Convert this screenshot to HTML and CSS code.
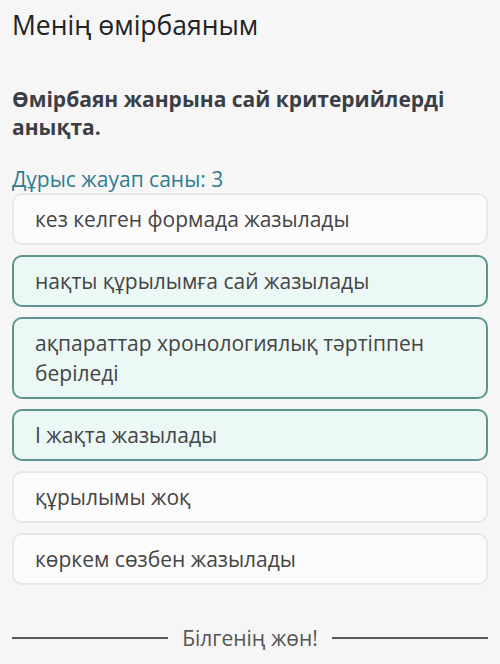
FILE: index.html
```html
<!DOCTYPE html>
<html lang="kk">

<head>
  <meta charset="UTF-8">
  <meta name="viewport" content="width=device-width, initial-scale=1.0">
  <title>Менің өмірбаяным</title>
  <link rel="stylesheet" href="styles.css">
</head>

<body>
  <div class="page">
    <h1 class="title">Менің өмірбаяным</h1>

    <p class="question">Өмірбаян жанрына сай критерийлерді анықта.</p>

    <p class="count">Дұрыс жауап саны: 3</p>

    <ul class="answers">
      <li class="answer">кез келген формада жазылады</li>
      <li class="answer selected">нақты құрылымға сай жазылады</li>
      <li class="answer selected">ақпараттар хронологиялық тәртіппен беріледі</li>
      <li class="answer selected">I жақта жазылады</li>
      <li class="answer">құрылымы жоқ</li>
      <li class="answer">көркем сөзбен жазылады</li>
    </ul>

    <div class="divider">
      <span class="divider-line"></span>
      <span class="divider-text">Білгенің жөн!</span>
      <span class="divider-line"></span>
    </div>
  </div>
</body>

</html>
```

FILE: styles.css
```css
* {
  padding: 0;
  margin: 0;
  box-sizing: border-box;
}

body {
  background: #f6f6f6;
  font-family: "Open Sans", "Noto Sans", sans-serif;
  color: #444;
}

.page {
  padding: 8px 12px 0;
}

.title {
  font-size: 26.5px;
  font-weight: normal;
  line-height: 34px;
  color: #222;
}

.question {
  margin-top: 43px;
  font-size: 21px;
  font-weight: bold;
  line-height: 28px;
  color: #3b3f45;
}

.count {
  margin-top: 24px;
  font-size: 21px;
  line-height: 28px;
  color: #2d7d8e;
}

.answers {
  list-style: none;
  display: flex;
  flex-direction: column;
  gap: 10px;
}

.answer {
  padding: 9px 21px;
  font-size: 21px;
  line-height: 30px;
  background: #fbfbfb;
  border: 2px solid #e8e8e8;
  border-radius: 10px;
  color: #444;
}

.answer.selected {
  background: #ecf8f5;
  border-color: #5b958e;
}

.divider {
  display: flex;
  align-items: center;
  gap: 14px;
  margin-top: 39px;
}

.divider-line {
  flex: 1;
  height: 2px;
  background: #5a5a5a;
}

.divider-text {
  font-size: 21px;
  line-height: 28px;
  color: #555;
}
```
